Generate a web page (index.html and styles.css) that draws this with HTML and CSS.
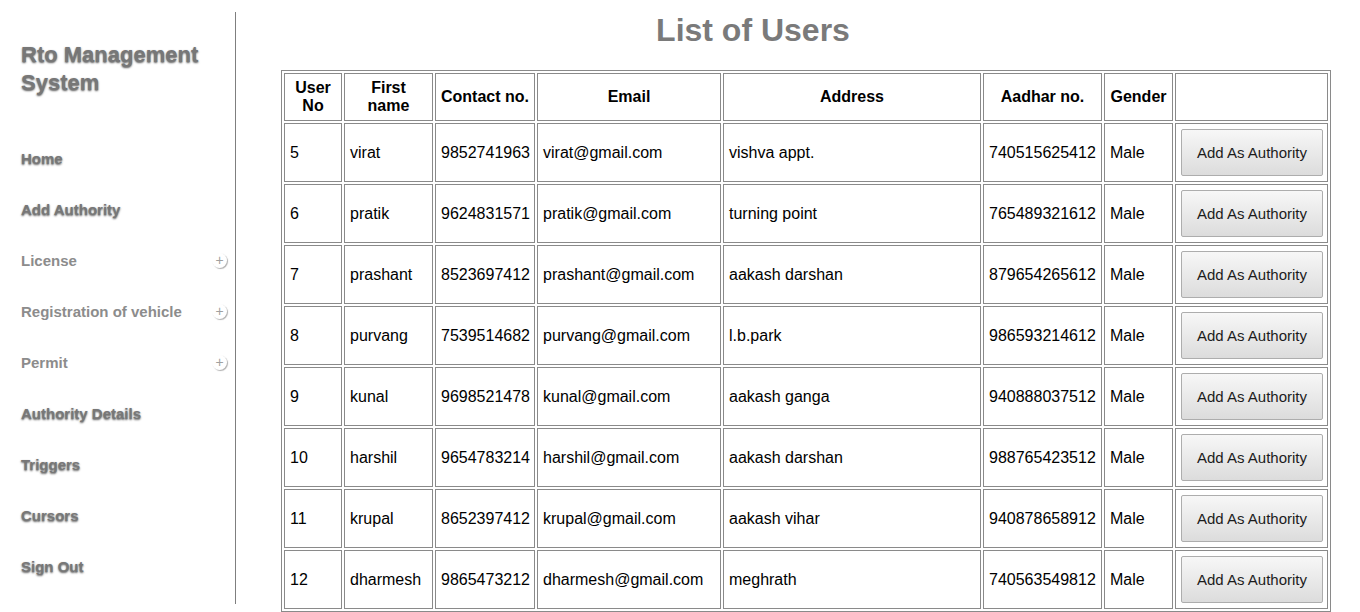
FILE: index.html
```html
<!DOCTYPE html>
<html>
<head>
<meta charset="utf-8">
<title>List of Users</title>
<link rel="stylesheet" href="styles.css">
</head>
<body>
<div class="page">
  <aside class="sidebar">
    <div class="brand">Rto Management System</div>
    <nav class="nav">
      <a class="nav-item strong" href="#">Home</a>
      <a class="nav-item strong" href="#">Add Authority</a>
      <a class="nav-item sub" href="#"><span>License</span><span class="plus">+</span></a>
      <a class="nav-item sub" href="#"><span>Registration of vehicle</span><span class="plus">+</span></a>
      <a class="nav-item sub" href="#"><span>Permit</span><span class="plus">+</span></a>
      <a class="nav-item strong" href="#">Authority Details</a>
      <a class="nav-item strong" href="#">Triggers</a>
      <a class="nav-item strong" href="#">Cursors</a>
      <a class="nav-item strong" href="#">Sign Out</a>
    </nav>
  </aside>
  <main class="main">
    <h1 class="title">List of Users</h1>
    <table class="users">
      <thead>
        <tr>
          <th class="c1">User No</th>
          <th class="c2">First name</th>
          <th class="c3">Contact no.</th>
          <th class="c4">Email</th>
          <th class="c5">Address</th>
          <th class="c6">Aadhar no.</th>
          <th class="c7">Gender</th>
          <th class="c8"></th>
        </tr>
      </thead>
      <tbody>
        <tr><td>5</td><td>virat</td><td>9852741963</td><td>virat@gmail.com</td><td>vishva appt.</td><td>740515625412</td><td>Male</td><td><button class="btn">Add As Authority</button></td></tr>
        <tr><td>6</td><td>pratik</td><td>9624831571</td><td>pratik@gmail.com</td><td>turning point</td><td>765489321612</td><td>Male</td><td><button class="btn">Add As Authority</button></td></tr>
        <tr><td>7</td><td>prashant</td><td>8523697412</td><td>prashant@gmail.com</td><td>aakash darshan</td><td>879654265612</td><td>Male</td><td><button class="btn">Add As Authority</button></td></tr>
        <tr><td>8</td><td>purvang</td><td>7539514682</td><td>purvang@gmail.com</td><td>l.b.park</td><td>986593214612</td><td>Male</td><td><button class="btn">Add As Authority</button></td></tr>
        <tr><td>9</td><td>kunal</td><td>9698521478</td><td>kunal@gmail.com</td><td>aakash ganga</td><td>940888037512</td><td>Male</td><td><button class="btn">Add As Authority</button></td></tr>
        <tr><td>10</td><td>harshil</td><td>9654783214</td><td>harshil@gmail.com</td><td>aakash darshan</td><td>988765423512</td><td>Male</td><td><button class="btn">Add As Authority</button></td></tr>
        <tr><td>11</td><td>krupal</td><td>8652397412</td><td>krupal@gmail.com</td><td>aakash vihar</td><td>940878658912</td><td>Male</td><td><button class="btn">Add As Authority</button></td></tr>
        <tr><td>12</td><td>dharmesh</td><td>9865473212</td><td>dharmesh@gmail.com</td><td>meghrath</td><td>740563549812</td><td>Male</td><td><button class="btn">Add As Authority</button></td></tr>
      </tbody>
    </table>
  </main>
</div>
</body>
</html>
```

FILE: styles.css
```css
html, body {
  margin: 0;
  padding: 0;
  background: #ffffff;
  font-family: "Liberation Sans", Arial, sans-serif;
}

.page {
  display: flex;
  align-items: flex-start;
  width: 1360px;
  height: 612px;
  overflow: hidden;
}

.sidebar {
  width: 235px;
  height: 592px;
  margin-top: 12px;
  border-right: 1px solid #7f7f7f;
  box-sizing: content-box;
  flex-shrink: 0;
}

.brand {
  margin: 29px 0 0 21px;
  font-size: 22px;
  line-height: 28px;
  font-weight: bold;
  color: #777777;
  text-shadow: 0 1px 2px rgba(0, 0, 0, 0.65);
  width: 200px;
}

.nav {
  display: flex;
  flex-direction: column;
  margin-top: 36px;
}

.nav-item {
  display: flex;
  align-items: center;
  justify-content: space-between;
  height: 51px;
  padding: 0 8px 0 21px;
  font-size: 15px;
  font-weight: bold;
  text-decoration: none;
}

.nav-item.strong {
  color: #777777;
  text-shadow: 0 1px 2px rgba(0, 0, 0, 0.65);
}

.nav-item.sub {
  color: #8c8c8c;
}

.plus {
  width: 15px;
  height: 15px;
  border-radius: 50%;
  box-shadow: 1px 1px 1px #b0b0b0;
  color: #a0a0a0;
  font-size: 14px;
  font-weight: normal;
  line-height: 14px;
  text-align: center;
}

.main {
  flex: 1;
  padding: 12px 0 0 45px;
}

.title {
  margin: 0 135px 21px 0;
  font-size: 32px;
  font-weight: bold;
  color: #7a7a7a;
  text-align: center;
  line-height: 37px;
}

.users {
  width: 1050px;
  table-layout: fixed;
  border: 1px solid #8a8a8a;
  border-collapse: separate;
  border-spacing: 2px;
  font-size: 16px;
  color: #000;
}

.users th,
.users td {
  border: 1px solid #8a8a8a;
  padding: 5px;
  box-sizing: border-box;
}

.users th {
  font-weight: bold;
  text-align: center;
  height: 48px;
  line-height: 18px;
}

.users td {
  text-align: left;
  height: 59px;
  vertical-align: middle;
  white-space: nowrap;
}

.c1 { width: 58px; }
.c2 { width: 89px; }
.c3 { width: 100px; }
.c4 { width: 184px; }
.c5 { width: 258px; }
.c6 { width: 119px; }
.c7 { width: 69px; }
.c8 { width: 153px; }

.btn {
  display: block;
  width: 142px;
  height: 47px;
  padding: 0;
  border: 1px solid #adadad;
  border-radius: 2px;
  background: linear-gradient(#f7f7f7, #dcdcdc);
  font-family: "Liberation Sans", Arial, sans-serif;
  font-size: 15px;
  color: #1c1c1c;
}
```
